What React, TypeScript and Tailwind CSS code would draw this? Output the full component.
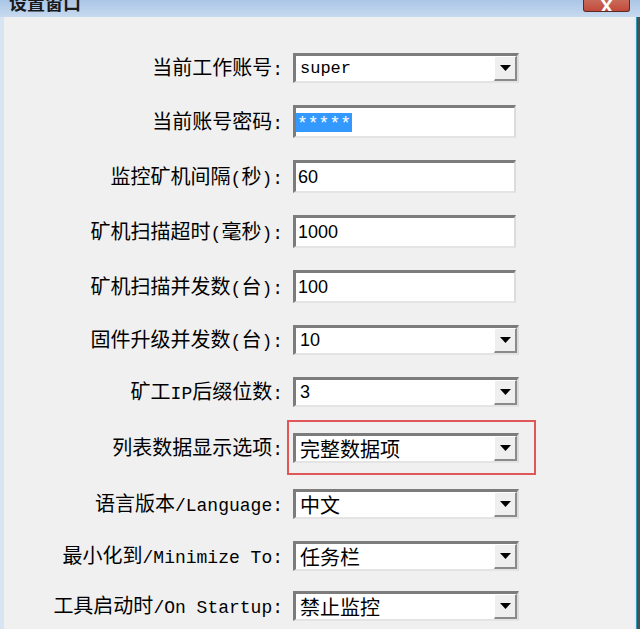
import React from "react";

const cjkFont = "font-['Noto_Sans_CJK_SC',sans-serif]";

// split a label into CJK runs and latin runs, the dialog font draws them at different widths
function Label({ text }: { text: string }) {
  const parts = text.match(/[\u4e00-\u9fff]+|[^\u4e00-\u9fff]+/g) || [];
  return (
    <div className="text-right leading-none text-black">
      {parts.map((p, i) =>
        /[\u4e00-\u9fff]/.test(p) ? (
          <span key={i} className={`text-[20px] ${cjkFont}`}>
            {p}
          </span>
        ) : (
          <span key={i} className="font-['Liberation_Mono',monospace] text-[18px]">
            {p}
          </span>
        )
      )}
    </div>
  );
}

function Arrow() {
  return (
    <div className="flex h-full w-[23px] items-center justify-center border-b-2 border-r-2 border-t border-l border-b-[#8a8a8a] border-r-[#8a8a8a] border-t-white border-l-white bg-[#efefef]">
      <svg width="11" height="6" viewBox="0 0 11 6">
        <path d="M0 0 H11 L5.5 6 Z" fill="#000" />
      </svg>
    </div>
  );
}

function Combo({ value, className }: { value: string; className: string }) {
  return (
    <div className="flex h-[30px] w-[226px] border-l-[3px] border-t-[3px] border-b-2 border-r-2 border-l-[#7c7c7c] border-t-[#7c7c7c] border-b-[#e4e4e4] border-r-[#dcdcdc] bg-white">
      <div className={`flex flex-1 items-center pl-[4px] text-black ${className}`}>{value}</div>
      <Arrow />
    </div>
  );
}

function Input({ value, selected }: { value: string; selected?: boolean }) {
  return (
    <div className="flex h-[33px] w-[223px] items-center border-l-[3px] border-t-[3px] border-b-2 border-r-2 border-l-[#7c7c7c] border-t-[#7c7c7c] border-b-[#e4e4e4] border-r-[#dcdcdc] bg-white">
      {selected ? (
        <span className="inline-block h-[19px] bg-[#3399ff] px-[1px] pt-[4px] font-['Liberation_Mono',monospace] text-[18px] leading-[15px] text-white">
          {value}
        </span>
      ) : (
        <span className="pl-[2px] font-['Liberation_Sans',sans-serif] text-[18px] text-black">{value}</span>
      )}
    </div>
  );
}

function Row({ label, mt, children }: { label: string; mt: string; children: React.ReactNode }) {
  return (
    <div className={`grid grid-cols-[279px_auto] items-center gap-x-[10px] ${mt}`}>
      <Label text={label} />
      <div className="relative">{children}</div>
    </div>
  );
}

export default function App() {
  const mono = "font-['Liberation_Mono',monospace] text-[17px]";
  const sans = "font-['Liberation_Sans',sans-serif] text-[18px]";
  const cjk = `${cjkFont} text-[20px]`;
  return (
    <div className="flex h-[629px] w-[640px] flex-col overflow-hidden bg-[#d3e2f3]">
      <div className="relative h-[17px] bg-gradient-to-b from-[#aac6e6] to-[#c7daef]">
        <div className={`absolute left-[9px] top-[-11px] text-[18px] font-bold text-[#1a1a1a] ${cjkFont}`}>设置窗口</div>
        <div className="absolute left-[583px] top-0 flex h-[12px] w-[47px] items-end justify-center overflow-hidden rounded-b-[3px] border border-t-0 border-[#5a2a25] bg-gradient-to-b from-[#c96a5a] to-[#c2493a]">
          <span className="mb-[-1px] font-['Liberation_Sans',sans-serif] text-[22px] font-bold leading-[14px] text-white">x</span>
        </div>
      </div>
      <div className="flex flex-1">
        <div className="w-[4px] bg-[#d6e4f4]" />
        <div className="flex-1 bg-[#f0f0f0] pt-[36px]">
          <Row label="当前工作账号:" mt="mt-0">
            <Combo value="super" className={mono} />
          </Row>
          <Row label="当前账号密码:" mt="mt-[22px]">
            <Input value="*****" selected />
          </Row>
          <Row label="监控矿机间隔(秒):" mt="mt-[22px]">
            <Input value="60" />
          </Row>
          <Row label="矿机扫描超时(毫秒):" mt="mt-[22px]">
            <Input value="1000" />
          </Row>
          <Row label="矿机扫描并发数(台):" mt="mt-[22px]">
            <Input value="100" />
          </Row>
          <Row label="固件升级并发数(台):" mt="mt-[22px]">
            <Combo value="10" className={sans} />
          </Row>
          <Row label="矿工IP后缀位数:" mt="mt-[22px]">
            <Combo value="3" className={sans} />
          </Row>
          <Row label="列表数据显示选项:" mt="mt-[26px]">
            <Combo value="完整数据项" className={cjk} />
            <div className="pointer-events-none absolute left-[-6px] top-[-13px] h-[55px] w-[249px] border-2 border-[#e0575a]" />
          </Row>
          <Row label="语言版本/Language:" mt="mt-[26px]">
            <Combo value="中文" className={cjk} />
          </Row>
          <Row label="最小化到/Minimize To:" mt="mt-[22px]">
            <Combo value="任务栏" className={cjk} />
          </Row>
          <Row label="工具启动时/On Startup:" mt="mt-[20px]">
            <Combo value="禁止监控" className={cjk} />
          </Row>
        </div>
        <div className="w-[2px] bg-[#ece8f6]" />
        <div className="w-[1px] bg-[#2b9fb2]" />
        <div className="w-[3px] bg-[#4a4f55]" />
      </div>
    </div>
  );
}
